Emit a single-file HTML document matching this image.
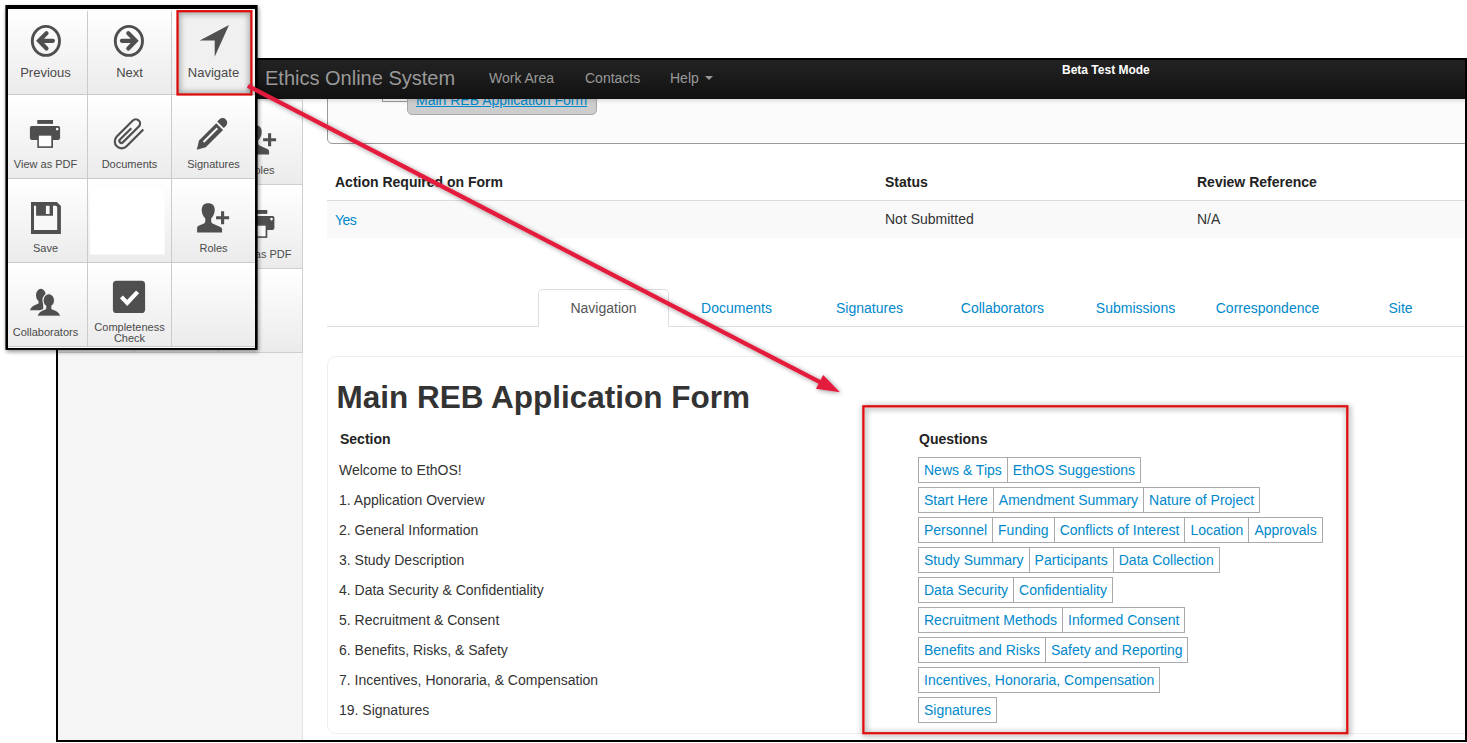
<!DOCTYPE html>
<html lang="en">
<head>
<meta charset="utf-8">
<title>Ethics Online System - Navigate</title>
<style>
*{box-sizing:border-box;}
html,body{margin:0;padding:0;}
body{width:1467px;height:743px;overflow:hidden;background:#fff;position:relative;
 font-family:"Liberation Sans",Arial,sans-serif;font-size:14px;color:#333;}
a{color:#0088cc;text-decoration:none;}
.abs{position:absolute;}
.t{position:absolute;white-space:nowrap;line-height:20px;font-size:14px;}
.b{font-weight:bold;}
/* ---------- framed screenshot ---------- */
#frame{position:absolute;left:56px;top:58px;width:1411px;height:684px;border:2px solid #000;overflow:hidden;background:#fff;}
#pg{position:absolute;left:-58px;top:-60px;width:1467px;height:743px;}
#navbar{position:absolute;left:58px;top:60px;width:1409px;height:39px;
 background:linear-gradient(#232323,#111);box-shadow:0 1px 5px rgba(0,0,0,.18);}
#sidebar{position:absolute;left:58px;top:99px;width:245px;height:644px;background:#f5f5f5;border-right:1px solid #e2e2e2;}
.scell{position:absolute;width:84px;height:84px;border-right:1px solid #cfcfcf;border-bottom:1px solid #cfcfcf;
 background:linear-gradient(#ffffff,#ebebeb);}
.lbl11{position:absolute;left:0;width:83px;text-align:center;font-size:11px;line-height:12px;color:#4a4a4a;white-space:nowrap;}
.lbl13{position:absolute;left:0;width:83px;text-align:center;font-size:13px;line-height:16px;color:#4a4a4a;white-space:nowrap;}
/* ---------- popup ---------- */
#grid{position:absolute;left:8px;top:9px;width:247px;height:339px;overflow:hidden;background:#fbfbfb;}
.cell{position:absolute;width:84px;height:84px;border-right:1px solid #cbcbcb;border-bottom:1px solid #cbcbcb;
 background:linear-gradient(#ffffff,#ebebeb);}
.cell svg,.scell svg{position:absolute;left:0;top:0;overflow:visible;}
/* ---------- main ---------- */
.qrow{position:absolute;left:918px;height:26px;display:flex;}
.qrow a{display:block;height:26px;border:1px solid #aaa;padding:0 5px;margin-left:-1px;line-height:24px;font-size:14px;white-space:nowrap;background:#fff;}
.qrow a:first-child{margin-left:0;}
.tab{position:absolute;top:289px;width:131px;height:38px;border:1px solid transparent;text-align:center;line-height:36.8px;font-size:14px;}
</style>
</head>
<body>

<div id="frame"><div id="pg">
  <!-- MAIN CONTENT -->
  <div id="main">
    <!-- top box (partly hidden under navbar) -->
    <div class="abs" style="left:327px;top:70px;width:1200px;height:74px;border:1px solid #999;border-radius:5px;background:#fbfbfb;"></div>
    <div class="abs" style="left:382px;top:90px;width:26px;height:12px;border-left:1px solid #999;border-bottom:1px solid #999;"></div>
    <div class="abs" style="left:407px;top:84px;width:190px;height:31px;border:1px solid #a8a8a8;border-radius:5px;background:#cdcdcd;"></div>
    <a class="t" style="left:416px;top:90px;text-decoration:underline;">Main REB Application Form</a>

    <!-- status table -->
    <div class="t b" style="left:335px;top:172px;color:#222;">Action Required on Form</div>
    <div class="t b" style="left:885px;top:172px;color:#222;">Status</div>
    <div class="t b" style="left:1197px;top:172px;color:#222;">Review Reference</div>
    <div class="abs" style="left:327px;top:200px;width:1200px;height:38px;border-top:1px solid #ddd;background:#f9f9f9;"></div>
    <a class="t" style="left:335px;top:209.7px;font-size:14px;letter-spacing:-0.55px;">Yes</a>
    <div class="t" style="left:885px;top:209px;">Not Submitted</div>
    <div class="t" style="left:1197px;top:209px;">N/A</div>

    <!-- tabs -->
    <div class="abs" style="left:327px;top:326px;width:1200px;height:1px;background:#ddd;"></div>
    <div class="tab" style="left:538px;border:1px solid #ddd;border-bottom-color:#fff;border-radius:5px 5px 0 0;background:#fff;color:#555;">Navigation</div>
    <a class="tab" style="left:671px;">Documents</a>
    <a class="tab" style="left:804px;">Signatures</a>
    <a class="tab" style="left:937px;">Collaborators</a>
    <a class="tab" style="left:1070px;">Submissions</a>
    <a class="tab" style="left:1202px;">Correspondence</a>
    <a class="tab" style="left:1335px;">Site</a>

    <!-- panel -->
    <div class="abs" style="left:327px;top:356px;width:1300px;height:378px;border:1px solid #eee;border-radius:9px;background:#fff;"></div>
    <div class="t b" style="left:336.5px;top:378px;font-size:31.5px;line-height:38px;color:#333;">Main REB Application Form</div>
    <div class="t b" style="left:340px;top:429px;color:#222;">Section</div>
    <div class="t" style="left:339px;top:460px;">Welcome to EthOS!</div>
    <div class="t" style="left:339px;top:490px;">1. Application Overview</div>
    <div class="t" style="left:339px;top:520px;">2. General Information</div>
    <div class="t" style="left:339px;top:550px;">3. Study Description</div>
    <div class="t" style="left:339px;top:580px;">4. Data Security &amp; Confidentiality</div>
    <div class="t" style="left:339px;top:610px;">5. Recruitment &amp; Consent</div>
    <div class="t" style="left:339px;top:640px;">6. Benefits, Risks, &amp; Safety</div>
    <div class="t" style="left:339px;top:670px;">7. Incentives, Honoraria, &amp; Compensation</div>
    <div class="t" style="left:339px;top:700px;">19. Signatures</div>

    <div class="t b" style="left:919px;top:429px;color:#222;">Questions</div>
    <div class="qrow" style="top:457px;"><a>News &amp; Tips</a><a>EthOS Suggestions</a></div>
    <div class="qrow" style="top:487px;"><a>Start Here</a><a>Amendment Summary</a><a>Nature of Project</a></div>
    <div class="qrow" style="top:517px;"><a>Personnel</a><a>Funding</a><a>Conflicts of Interest</a><a>Location</a><a>Approvals</a></div>
    <div class="qrow" style="top:547px;"><a>Study Summary</a><a>Participants</a><a>Data Collection</a></div>
    <div class="qrow" style="top:577px;"><a>Data Security</a><a>Confidentiality</a></div>
    <div class="qrow" style="top:607px;"><a>Recruitment Methods</a><a>Informed Consent</a></div>
    <div class="qrow" style="top:637px;"><a>Benefits and Risks</a><a>Safety and Reporting</a></div>
    <div class="qrow" style="top:667px;"><a>Incentives, Honoraria, Compensation</a></div>
    <div class="qrow" style="top:697px;"><a>Signatures</a></div>
  </div>
  <!-- SIDEBAR -->
  <div id="sidebar">
<div class="scell" style="left:161px;top:2px;"><svg width="84" height="84" viewBox="172 179 84 84"><g transform="translate(0,0)"><path d="M208.2 203.3 C212.6 203.3 214.7 206 214.7 209.8 C214.7 214.4 212 219.4 208.2 219.4 C204.4 219.4 201.7 214.4 201.7 209.8 C201.7 206 203.8 203.3 208.2 203.3 Z" fill="#4f4f4f"/>
<path d="M197.1 232.4 V227.6 Q197.1 226.4 198.6 225.7 L204 223.4 Q205.3 222.8 205.3 221.2 V216 H211.2 V221.2 Q211.2 222.8 212.5 223.4 L220.4 227 Q222.1 227.8 222.1 229.4 V232.4 Z" fill="#4f4f4f"/>
<path d="M216.1 217.7 H229.1 M222.6 211.3 V224.3" stroke="#4f4f4f" stroke-width="3.1" fill="none"/></g></svg><div class="lbl11" style="top:63px;">Roles</div></div>
<div class="scell" style="left:161px;top:86px;"><svg width="84" height="84" viewBox="4.7 95 84 84"><rect x="37.3" y="120" width="15.7" height="3.9" fill="#4f4f4f"/>
<rect x="29.9" y="126" width="30.2" height="13.9" rx="1.8" fill="#4f4f4f"/>
<rect x="37.3" y="139" width="15.7" height="8.9" fill="#4f4f4f"/>
<rect x="38.9" y="135.7" width="12.4" height="10.6" fill="#fdfdfd"/>
<circle cx="57.2" cy="129.1" r="1.3" fill="#fdfdfd"/></svg><div class="lbl11" style="top:63px;left:-0.7px;">View as PDF</div></div>
<div class="scell" style="left:161px;top:170px;"></div>
<div class="scell" style="left:77px;top:170px;"></div>
<div class="scell" style="left:-7px;top:170px;"></div>
</div>
  <!-- NAVBAR -->
  <div id="navbar">
    <div class="t" style="left:207px;top:4px;font-size:20px;line-height:28px;color:#999;">Ethics Online System</div>
    <div class="t" style="left:431px;top:8px;color:#999;">Work Area</div>
    <div class="t" style="left:527px;top:8px;color:#999;">Contacts</div>
    <div class="t" style="left:612px;top:8px;color:#999;">Help</div>
    <div class="abs" style="left:647px;top:16px;width:0;height:0;border-left:4px solid transparent;border-right:4px solid transparent;border-top:4px solid #999;"></div>
    <div class="t b" style="left:1004px;top:1px;font-size:12px;line-height:18px;color:#fff;">Beta Test Mode</div>
  </div>
</div></div>

<!-- POPUP -->
<svg id="popup" class="abs" style="left:0;top:0;overflow:visible" width="270" height="365" viewBox="0 0 270 365"><defs><filter id="psh" x="-5%" y="-5%" width="112%" height="112%"><feGaussianBlur in="SourceAlpha" stdDeviation="2.2"/><feOffset dx="1" dy="2"/><feComponentTransfer><feFuncA type="linear" slope="0.42"/></feComponentTransfer><feMerge><feMergeNode/><feMergeNode in="SourceGraphic"/></feMerge></filter></defs><rect x="5.4" y="5" width="252.2" height="344.9" fill="#000" filter="url(#psh)"/></svg>
<div id="grid"><div class="abs" style="left:-8px;top:-9px;">
<div class="cell" style="left:4px;top:11px;"><svg width="84" height="84" viewBox="4 11 84 84"><ellipse cx="45.9" cy="40.9" rx="13.6" ry="14.5" fill="none" stroke="#4f4f4f" stroke-width="2.9"/>
<path d="M52.9 40.8 H39.4 M46.5 33.2 L39.0 40.8 L46.5 48.4" fill="none" stroke="#4f4f4f" stroke-width="4.2" stroke-linecap="round" stroke-linejoin="miter"/></svg><div class="lbl13" style="top:53.5px;">Previous</div></div>
<div class="cell" style="left:88px;top:11px;"><svg width="84" height="84" viewBox="88 11 84 84"><ellipse cx="128.9" cy="40.9" rx="13.6" ry="14.5" fill="none" stroke="#4f4f4f" stroke-width="2.9"/>
<path d="M121.9 40.8 H135.4 M128.3 33.2 L135.8 40.8 L128.3 48.4" fill="none" stroke="#4f4f4f" stroke-width="4.2" stroke-linecap="round" stroke-linejoin="miter"/></svg><div class="lbl13" style="top:53.5px;">Next</div></div>
<div class="cell" style="left:172px;top:11px;"><div class="abs" style="left:6px;top:1px;width:73px;height:82px;background:#f0f0f0;box-shadow:inset 0 0 6px 2px rgba(0,0,0,.33);"></div><svg width="84" height="84" viewBox="172 11 84 84"><path d="M229 24.9 L199.7 40.5 L214.7 40.5 L214.7 56.8 Z" fill="#4f4f4f"/></svg><div class="lbl13" style="top:53.5px;">Navigate</div></div>
<div class="cell" style="left:4px;top:95px;"><svg width="84" height="84" viewBox="4 95 84 84"><rect x="37.3" y="120" width="15.7" height="3.9" fill="#4f4f4f"/>
<rect x="29.9" y="126" width="30.2" height="13.9" rx="1.8" fill="#4f4f4f"/>
<rect x="37.3" y="139" width="15.7" height="8.9" fill="#4f4f4f"/>
<rect x="38.9" y="135.7" width="12.4" height="10.6" fill="#fdfdfd"/>
<circle cx="57.2" cy="129.1" r="1.3" fill="#fdfdfd"/></svg><div class="lbl11" style="top:63px;">View as PDF</div></div>
<div class="cell" style="left:88px;top:95px;"><svg width="84" height="84" viewBox="88 95 84 84"><g transform="translate(20,110) rotate(-45)"><path d="M73.4 101 L49.7 101 A6.9 6.9 0 0 1 49.7 87.2 L72.4 87.2 A4.2 4.2 0 0 1 72.4 95.6 L49.8 95.6 A2 2 0 0 1 49.8 91.6 L65.8 91.6" fill="none" stroke="#4f4f4f" stroke-width="2.2"/></g></svg><div class="lbl11" style="top:63px;">Documents</div></div>
<div class="cell" style="left:172px;top:95px;"><svg width="84" height="84" viewBox="172 95 84 84"><g transform="translate(185,110) rotate(-45)">
<path d="M-19.7 36.4 L-11.6 31.4 L12.8 31.4 L12.8 41 L-11.6 41 Z" fill="#4f4f4f"/>
<path d="M14.6 30.9 L17.6 30.9 A4.65 4.65 0 0 1 17.6 40.2 L14.6 40.2 Z" fill="#4f4f4f"/>
<rect x="-9.5" y="34.7" width="19.5" height="2" fill="#f6f6f6"/></g></svg><div class="lbl11" style="top:63px;">Signatures</div></div>
<div class="cell" style="left:4px;top:179px;"><svg width="84" height="84" viewBox="4 179 84 84"><path d="M31 201.9 H56.9 L60.9 206 V233.9 H31 Z" fill="#4f4f4f"/>
<path d="M34 205.8 H36.1 V215.7 H53 V205.8 H56 L57.2 207 V230 H34 Z" fill="#f8f8f8"/>
<rect x="45.9" y="205.8" width="3.7" height="8.2" fill="#f8f8f8"/></svg><div class="lbl11" style="top:63px;">Save</div></div>
<div class="cell" style="left:88px;top:179px;"><svg width="84" height="84" viewBox="88 179 84 84"><rect x="90" y="189" width="74.5" height="65.5" fill="#fff"/></svg></div>
<div class="cell" style="left:172px;top:179px;"><svg width="84" height="84" viewBox="172 179 84 84"><g transform="translate(0,0)"><path d="M208.2 203.3 C212.6 203.3 214.7 206 214.7 209.8 C214.7 214.4 212 219.4 208.2 219.4 C204.4 219.4 201.7 214.4 201.7 209.8 C201.7 206 203.8 203.3 208.2 203.3 Z" fill="#4f4f4f"/>
<path d="M197.1 232.4 V227.6 Q197.1 226.4 198.6 225.7 L204 223.4 Q205.3 222.8 205.3 221.2 V216 H211.2 V221.2 Q211.2 222.8 212.5 223.4 L220.4 227 Q222.1 227.8 222.1 229.4 V232.4 Z" fill="#4f4f4f"/>
<path d="M216.1 217.7 H229.1 M222.6 211.3 V224.3" stroke="#4f4f4f" stroke-width="3.1" fill="none"/></g></svg><div class="lbl11" style="top:63px;">Roles</div></div>
<div class="cell" style="left:4px;top:263px;"><svg width="84" height="84" viewBox="4 263 84 84"><ellipse cx="40.9" cy="295.3" rx="4.9" ry="6.5" fill="#4f4f4f"/>
<path d="M30 310.3 Q31.3 306.2 36.2 304.6 L38.6 303.6 V299 H43.2 V310.3 Z" fill="#4f4f4f"/>
<g stroke="#f3f3f3" stroke-width="2.4" paint-order="stroke" fill="#4f4f4f"><path d="M37.6 315.8 Q39 311.4 44.2 309.9 L46.4 309 V303 H51.2 V309 L53.4 309.9 Q58.8 311.4 60.2 315.8 Z"/>
<ellipse cx="48.8" cy="300.4" rx="5.2" ry="6.2"/></g>
<rect x="36" y="315.9" width="26" height="2" fill="#f0f0f0"/>
<path d="M46.4 309 V303 H51.2 V309 Z" fill="#4f4f4f"/></svg><div class="lbl11" style="top:63px;">Collaborators</div></div>
<div class="cell" style="left:88px;top:263px;"><svg width="84" height="84" viewBox="88 263 84 84"><rect x="112.9" y="280.8" width="32.2" height="32.3" rx="3.6" fill="#4f4f4f"/>
<path d="M121.4 296.9 L127.2 302.9 L137.6 291.9" fill="none" stroke="#fff" stroke-width="4.2"/></svg><div class="lbl11" style="top:58.5px;line-height:11px;">Completeness<br>Check</div></div>
<div class="cell" style="left:172px;top:263px;"></div>
</div></div>

<!-- ANNOTATIONS -->
<svg id="anno" class="abs" style="left:0;top:0" width="1467" height="743" viewBox="0 0 1467 743">
<defs>
<filter id="sh" x="-5%" y="-5%" width="110%" height="110%"><feGaussianBlur in="SourceAlpha" stdDeviation="2.8"/><feOffset dx="1" dy="1"/><feComponentTransfer><feFuncA type="linear" slope="0.42"/></feComponentTransfer><feMerge><feMergeNode/><feMergeNode in="SourceGraphic"/></feMerge></filter>
<filter id="sh2" x="-5%" y="-5%" width="110%" height="110%"><feGaussianBlur in="SourceAlpha" stdDeviation="3"/><feOffset dx="1.3" dy="1.3"/><feComponentTransfer><feFuncA type="linear" slope="0.6"/></feComponentTransfer><feMerge><feMergeNode/><feMergeNode in="SourceGraphic"/></feMerge></filter>
</defs>
<rect x="177.5" y="11.2" width="73.9" height="83.3" fill="none" stroke="#dd0808" stroke-width="2.2"/>
<rect x="863.4" y="406.3" width="483.9" height="326.9" fill="none" stroke="#dd0808" stroke-width="2.2" filter="url(#sh2)"/>
<g filter="url(#sh)"><path d="M247.9 85.9 L821 382.7" stroke="#e31b3c" stroke-width="4.3" fill="none"/>
<path d="M840 392.3 L823.2 375.1 L815.9 388.7 Z" fill="#e31b3c"/></g>
</svg>

</body>
</html>
